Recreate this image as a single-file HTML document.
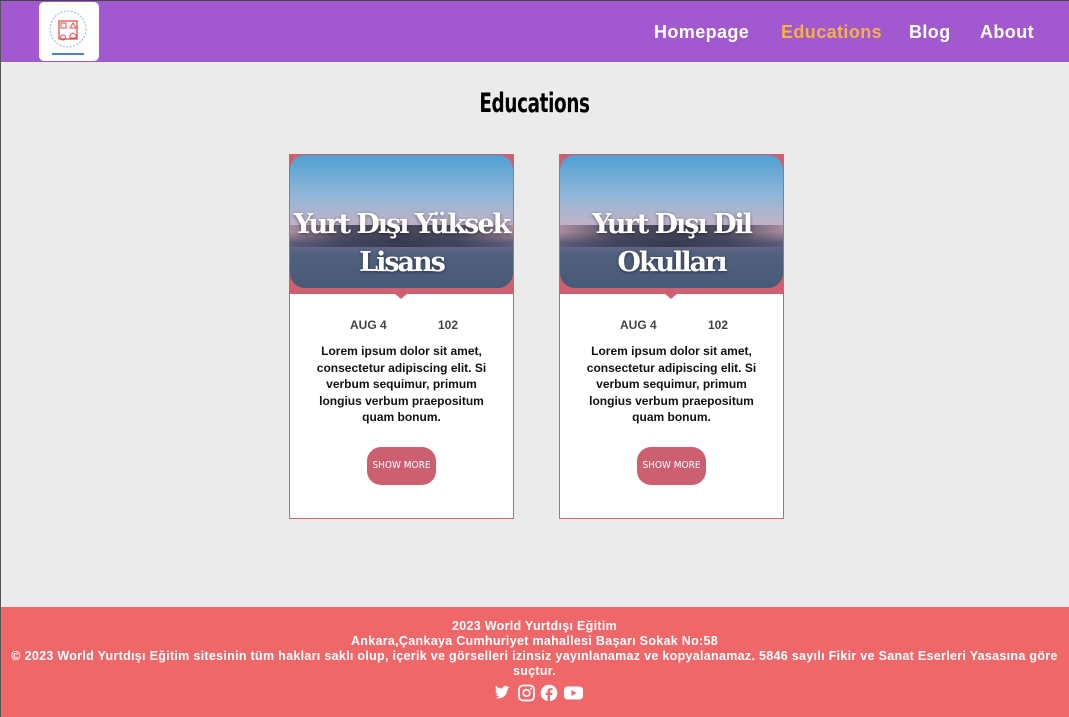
<!DOCTYPE html>
<html><head><meta charset="utf-8"><style>
*{margin:0;padding:0;box-sizing:border-box}
body{width:1069px;height:717px;background:#ebebeb;font-family:"Liberation Sans",sans-serif;position:relative;overflow:hidden}
.bl{position:absolute;left:0;top:0;width:1px;height:717px;background:#555;z-index:5}
.bt{position:absolute;left:0;top:0;width:1069px;height:1px;background:#444;z-index:5}
.hdr{position:absolute;left:0;top:1px;width:1069px;height:61px;background:#a259cf}
.logo{position:absolute;left:39px;top:1px;width:60px;height:59px;background:#fff;border-radius:5px}
.nav{position:absolute;top:21px;font-weight:bold;font-size:18px;letter-spacing:.4px;color:#fff}
h1{position:absolute;top:88px;left:0;width:1069px;text-align:center;font-size:27px;font-family:"DejaVu Sans",sans-serif;font-weight:bold;letter-spacing:-.5px;transform:scaleX(.68)}
.card{position:absolute;top:154px;width:225px;height:365px;border:1px solid #d06070;background:#fff}
.top{height:139px;background:#d06070;position:relative}
.img{position:absolute;left:0;top:0;width:223px;height:133px;border-radius:15px;overflow:hidden;background:linear-gradient(#4fa0d2 0%,#8fb6d8 30%,#b8b4cc 48%,#d4a6b8 58%,#6a6a88 66%,#50607e 75%,#485a78 100%)}
.city{position:absolute;left:0;top:70px;width:223px;height:22px;background:linear-gradient(90deg,rgba(60,60,80,.3),#3a3e55 25%,#2e3248 50%,#3a3e55 75%,rgba(60,60,80,.3));opacity:.85}
.ttl{position:absolute;left:0;top:51px;width:223px;text-align:center;color:#fff;font-family:"DejaVu Serif","Liberation Serif",serif;font-weight:bold;font-size:27px;line-height:38px;letter-spacing:-2px;text-shadow:0 1px 3px rgba(0,0,0,.5)}
.tri{position:absolute;left:104px;top:138px;width:0;height:0;border-left:7px solid transparent;border-right:7px solid transparent;border-top:6px solid #d06070}
.meta{position:absolute;top:163px;font-size:12px;font-weight:bold;color:#444}
.txt{position:absolute;top:188px;left:16px;width:191px;text-align:center;font-size:12px;font-weight:bold;line-height:16.5px;color:#111}
.btn{position:absolute;top:292px;left:77px;width:69px;height:38px;border-radius:14px;background:#cd6070;color:#fff;font-size:10px;text-align:center;line-height:38px;font-family:"DejaVu Sans Condensed",sans-serif}
.ft{position:absolute;left:0;top:607px;width:1069px;height:110px;background:#f0676a;color:#fff;text-align:center;font-weight:bold;font-size:12.5px;letter-spacing:.3px;line-height:15px;padding:12px 8px 0}
</style></head><body>
<div class="bl"></div><div class="bt"></div>
<div class="hdr">
<div class="logo"><svg width="60" height="59"><circle cx="29" cy="27" r="18" fill="none" stroke="#8ab4e8" stroke-dasharray="2 1.5"/><rect x="20" y="19" width="18" height="18" fill="none" stroke="#e05050" stroke-width="1.3"/><rect x="22" y="21" width="5" height="5" fill="none" stroke="#e05050"/><path d="M31 26l3-5 3 5z M24 33a2.5 2.5 0 1 0 .1 0z M31 33l3-2 3 2v3h-6z" fill="none" stroke="#e05050"/><rect x="13" y="51" width="32" height="2" fill="#4a80d0"/></svg></div>
<div class="nav" style="left:654px">Homepage</div>
<div class="nav" style="left:781px;color:#f5b04a">Educations</div>
<div class="nav" style="left:909px">Blog</div>
<div class="nav" style="left:980px">About</div>
</div>
<h1>Educations</h1>
<div class="card" style="left:289px"><div class="top"><div class="img"><div class="city"></div><div class="ttl">Yurt Dışı Yüksek Lisans</div></div><div class="tri"></div></div>
<div class="meta" style="left:60px">AUG 4</div><div class="meta" style="left:148px">102</div>
<div class="txt">Lorem ipsum dolor sit amet, consectetur adipiscing elit. Si verbum sequimur, primum longius verbum praepositum quam bonum.</div>
<div class="btn">SHOW MORE</div></div>
<div class="card" style="left:559px"><div class="top"><div class="img"><div class="city"></div><div class="ttl">Yurt Dışı Dil Okulları</div></div><div class="tri"></div></div>
<div class="meta" style="left:60px">AUG 4</div><div class="meta" style="left:148px">102</div>
<div class="txt">Lorem ipsum dolor sit amet, consectetur adipiscing elit. Si verbum sequimur, primum longius verbum praepositum quam bonum.</div>
<div class="btn">SHOW MORE</div></div>
<div class="ft">2023 World Yurtdışı Eğitim<br>Ankara,Çankaya Cumhuriyet mahallesi Başarı Sokak No:58<br>© 2023 World Yurtdışı Eğitim sitesinin tüm hakları saklı olup, içerik ve görselleri izinsiz yayınlanamaz ve kopyalanamaz. 5846 sayılı Fikir ve Sanat Eserleri Yasasına göre suçtur.
<div style="margin-top:5px;padding-left:8px"><svg width="90" height="18" viewBox="0 0 90 18"><path d="M1 14c6 1.5 11-1.5 12-6.5l1-3 2-1.5-2 .3c-1-2.5-5-2-5.5 1.2C5 4.5 3 3 2 1.5c-1 2 0 4 1 5H1.5c0 2 1 3 3 3.5-1 .6-2 .6-3 .5 1 1.2 2 1.8 4 2-1.5 1-3 1.5-4.5 1.5z" fill="#fff"/><rect x="25" y="1.5" width="15" height="15" rx="4" fill="none" stroke="#fff" stroke-width="1.8"/><circle cx="32.5" cy="9" r="3.3" fill="none" stroke="#fff" stroke-width="1.7"/><circle cx="37" cy="4.8" r="1" fill="#fff"/><circle cx="55" cy="9" r="8.3" fill="#fff"/><path d="M56 17.5v-6.5h2.2l.3-2.2H56V7.3c0-.7.3-1 1-1h1.5V4.3H56.5c-2.2 0-3 1.2-3 3V8.8h-1.8V11h1.8v6.5z" fill="#f0676a"/><rect x="70" y="2.5" width="19" height="13" rx="3.5" fill="#fff"/><path d="M77.5 6v6l5-3z" fill="#f0676a"/></svg></div></div>
</body></html>
